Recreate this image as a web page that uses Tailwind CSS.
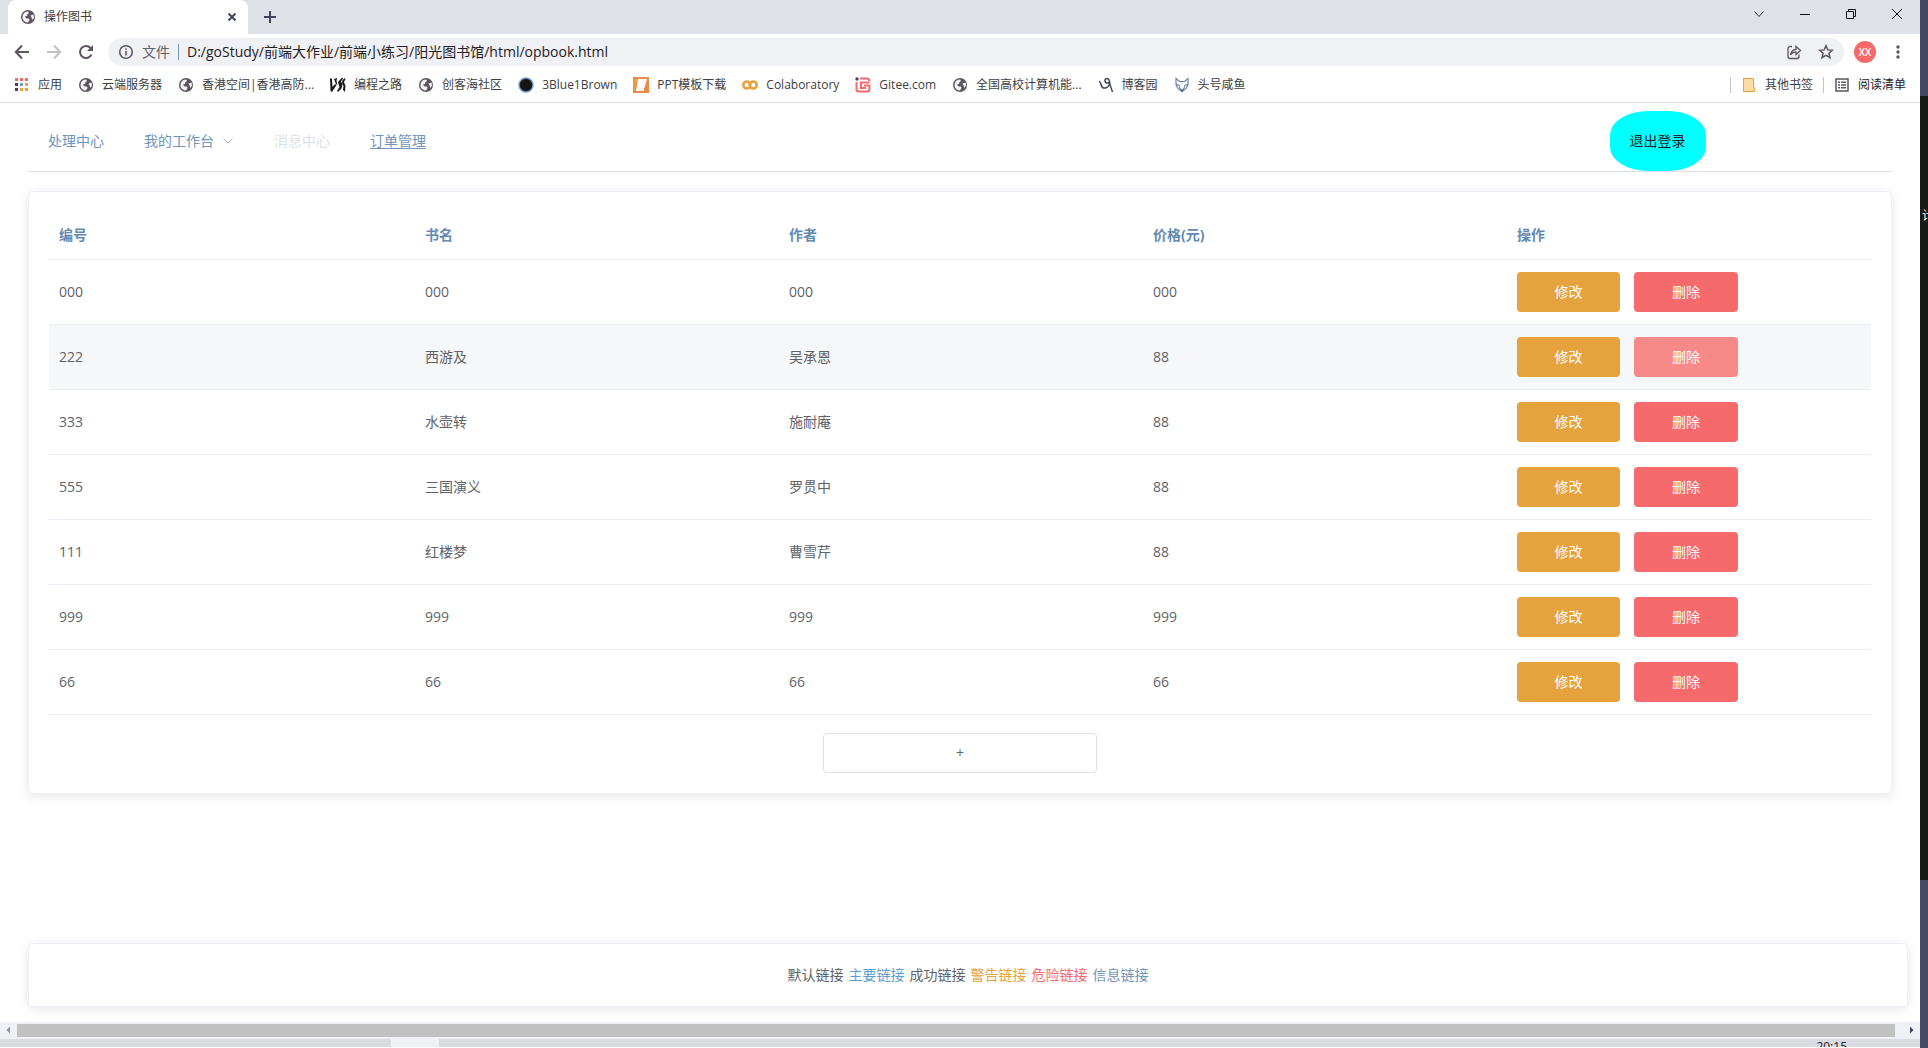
<!DOCTYPE html>
<html lang="zh-CN">
<head>
<meta charset="utf-8">
<title>操作图书</title>
<script src="https://cdn.jsdelivr.net/npm/@tailwindcss/browser@4"></script>
</head>
<body class="flex h-screen overflow-hidden bg-white font-['Open_Sans','Noto_Sans_CJK_SC',sans-serif] text-sm text-[#606266]">
<svg class="absolute size-0">
  <symbol id="globe" viewBox="0 0 16 16"><circle cx="8" cy="8" r="7" fill="#5d545f"/><path d="M3 5.500C4 3.500 6 2.300 8.200 2.400L9 4 7.500 5 7 7 4.800 7.600 6.500 9.500 9 9.500 9.500 11 8 13.500C5 13.500 2.500 11 2.500 8.500ZM10.500 6.500L13.500 5.500 14 8.500 12.500 11 11.500 8.500Z" fill="#f4f4f6"/></symbol>
</svg>

<div class="flex min-w-0 flex-1 flex-col">
  <!-- tab strip -->
  <div class="flex h-[34px] shrink-0 items-stretch bg-[#dee1e7] pl-2">
    <div class="flex w-60 items-center rounded-t-lg bg-white pr-2.5 pl-3 text-xs text-[#3c4043]">
      <svg class="mr-2 size-4"><use href="#globe"/></svg>
      <span class="flex-1">操作图书</span>
      <button aria-label="关闭标签页"><svg class="size-3" viewBox="0 0 12 12" stroke="#3f4458" stroke-width="2"><path d="M2.500 2.500l7 7M9.500 2.500l-7 7"/></svg></button>
    </div>
    <button aria-label="新标签页" class="ml-4"><svg class="size-3" viewBox="0 0 12 12" stroke="#3f4458" stroke-width="2"><path d="M6 0v12M0 6h12"/></svg></button>
    <div class="mr-[17px] ml-auto flex h-7 items-center gap-[34px]">
      <button aria-label="搜索标签页"><svg class="size-3" viewBox="0 0 12 12" fill="none" stroke="#333"><path d="M1.500 3.500l4.500 5 4.500-5"/></svg></button>
      <button aria-label="最小化"><svg class="size-3" viewBox="0 0 12 12" stroke="#111"><path d="M1 6.500h10"/></svg></button>
      <button aria-label="还原"><svg class="size-3" viewBox="0 0 12 12" fill="none" stroke="#111"><path d="M1.500 3.500h7v7h-7zM3.500 3.500v-2h7v7h-2"/></svg></button>
      <button aria-label="关闭"><svg class="size-3" viewBox="0 0 12 12" stroke="#111"><path d="M1 1l10 10M11 1L1 11"/></svg></button>
    </div>
  </div>

  <!-- address bar -->
  <div class="flex h-9 shrink-0 items-center pl-3.5">
    <button aria-label="后退"><svg class="size-4" viewBox="0 0 16 16" fill="none" stroke="#5d545f" stroke-width="2"><path d="M15 8H2M8 1.500L1.800 8 8 14.500"/></svg></button>
    <button aria-label="前进" class="ml-4"><svg class="size-4" viewBox="0 0 16 16" fill="none" stroke="#c2c2c4" stroke-width="2"><path d="M1 8h13M8 1.500L14.200 8 8 14.500"/></svg></button>
    <button aria-label="刷新" class="ml-4"><svg class="size-4" viewBox="0 0 16 16" fill="none" stroke="#5d545f" stroke-width="2"><path d="M13.500 10.500A6 6 0 1 1 12.500 4"/><path d="M15 1v6H9z" fill="#5d545f" stroke="none"/></svg></button>
    <div class="ml-3.5 flex h-7 flex-1 items-center rounded-full bg-[#f0f1f4] pr-2.5 pl-2.5">
      <svg class="size-4" viewBox="0 0 16 16" fill="none" stroke="#5d545f" stroke-width="1.500"><circle cx="8" cy="8" r="6.300"/><path d="M8 7v4.500M8 4.200v1.600"/></svg>
      <span class="ml-2 text-[#5f6368]">文件</span>
      <span class="mx-2 h-4 w-px bg-[#7295bd]"></span>
      <input aria-label="地址" class="min-w-0 flex-1 bg-transparent text-[#1f2023] outline-none" value="D:/goStudy/前端大作业/前端小练习/阳光图书馆/html/opbook.html">
      <button aria-label="分享"><svg class="size-4" viewBox="0 0 16 16" fill="none" stroke="#5d545f" stroke-width="1.300"><path d="M6 2.500H4a2 2 0 0 0-2 2v8a2 2 0 0 0 2 2h7a2 2 0 0 0 2-2V10.500"/><path d="M4.500 11C5 7.500 7 5.500 10 5.300V2.500l4.500 4-4.500 4V7.800C7.500 7.800 6 8.800 4.500 11Z"/></svg></button>
      <button aria-label="收藏" class="ml-4"><svg class="size-4" viewBox="0 0 16 16" fill="none" stroke="#5d545f" stroke-width="1.500"><path d="M8 1.800l1.800 4.100 4.500.4-3.400 2.900 1.100 4.400L8 11.300l-4 2.300 1.100-4.400L1.700 6.300l4.500-.4z"/></svg></button>
    </div>
    <span class="mx-2.5 flex size-[22px] items-center justify-center rounded-full bg-[#f66a6b] text-[10px] font-semibold text-white">XX</span>
    <button aria-label="菜单" class="mr-3.5 ml-1"><svg class="size-4" viewBox="0 0 16 16" fill="#5d545f"><circle cx="8" cy="3" r="1.700"/><circle cx="8" cy="8" r="1.700"/><circle cx="8" cy="13" r="1.700"/></svg></button>
  </div>

  <!-- bookmarks -->
  <nav class="flex h-[33px] shrink-0 items-center gap-4 border-b border-[#dcdde3] pr-3.5 pb-0.5 pl-3.5 text-xs whitespace-nowrap text-[#3c4043]">
    <a href="#" class="flex items-center gap-2"><svg class="size-4" viewBox="0 0 16 16"><path d="M1 1h3v3H1zM6 1h3v3H6zM11 1h3v3h-3z" fill="#f66a6b"/><path d="M1 6h3v3H1zM1 11h3v3H1z" fill="#3f4458"/><path d="M6 6h3v3H6z" fill="#6c9bcf"/><path d="M11 6h3v3h-3zM6 11h3v3H6zM11 11h3v3h-3z" fill="#e6a23c"/></svg>应用</a>
    <a href="#" class="flex items-center gap-2"><svg class="size-4"><use href="#globe"/></svg>云端服务器</a>
    <a href="#" class="flex items-center gap-2"><svg class="size-4"><use href="#globe"/></svg>香港空间|香港高防...</a>
    <a href="#" class="flex items-center gap-2"><svg class="size-4" viewBox="0 0 16 16" fill="#1a1a1a"><path d="M0 1l2 1 .5 8L5 7l1.500 1L2 15 .5 14zM4 2l3-1-.5 3 1 4-1.500-1zM8 5l4-4.500 1 1-2 3 1.500 3-1 4L8 15l-1-1 2.500-4zM12.500 3L15 1l.5 1-1.500 3 1.500 4-.5 6-2-2 .5-4-1.500-3z"/></svg>编程之路</a>
    <a href="#" class="flex items-center gap-2"><svg class="size-4"><use href="#globe"/></svg>创客海社区</a>
    <a href="#" class="flex items-center gap-2"><svg class="size-4" viewBox="0 0 16 16"><circle cx="8" cy="8" r="7" fill="#151515" stroke="#7ba6d2" stroke-width="1.500"/><circle cx="8" cy="8" r="6" fill="none" stroke="#30405c" stroke-dasharray="1 1"/></svg>3Blue1Brown</a>
    <a href="#" class="flex items-center gap-2"><svg class="size-4" viewBox="0 0 16 16"><path d="M0 0h16v16H0z" fill="#ec8a4a"/><path d="M5 2h9l-3.500 12H3z" fill="#fff"/><path d="M1 2h3L2 14H1z" fill="#e6a23c"/></svg>PPT模板下载</a>
    <a href="#" class="flex items-center gap-2"><svg class="size-4" viewBox="0 0 16 16" fill="none" stroke="#e6a23c" stroke-width="2.600"><circle cx="4.800" cy="8" r="3.500"/><circle cx="11.200" cy="8" r="3.500"/></svg>Colaboratory</a>
    <a href="#" class="flex items-center gap-2"><svg class="size-4" viewBox="0 0 16 16" fill="none" stroke="#f66a6b" stroke-width="2"><path d="M5 1.500h6.500a3.500 3.500 0 0 1 3.200 2.500M1.500 5v7.500a2 2 0 0 0 2 2H12a2.500 2.500 0 0 0 2.500-2.500V8.500H9M14.500 5.500H6v5.500h5"/><circle cx="2" cy="2" r="1.700" fill="#3f4458" stroke="none"/></svg>Gitee.com</a>
    <a href="#" class="flex items-center gap-2"><svg class="size-4"><use href="#globe"/></svg>全国高校计算机能...</a>
    <a href="#" class="flex items-center gap-2"><svg class="size-4" viewBox="0 0 16 16" fill="none" stroke="#3f4458" stroke-width="1.500"><path d="M1 4.500c1 0 1.500 1 2 3s2 4 4.500 3.500S12 8 11.500 4.500 7 .5 7 3.500s3.500 3.500 5 1M11.500 5c.5 3 1.500 6 3 10"/></svg>博客园</a>
    <a href="#" class="flex items-center gap-2"><svg class="size-4" viewBox="0 0 16 16" fill="none" stroke="#6a86a8" stroke-width="1.200"><path d="M2 1.500l3.500 3h5l3.500-3v6L12.500 11 8 14.800 3.500 11 2 7.500zM2 7l4 2M14 7l-4 2M5 9.500L8 14l3-4.500"/><path d="M6.500 12.800h3L8 15z" fill="#3f5f8a" stroke="none"/></svg>头号咸鱼</a>
    <div class="ml-auto flex items-center">
      <span class="mr-3 h-4 w-px bg-[#c4c4c8]"></span>
      <a href="#" class="flex items-center gap-2.5"><svg class="h-4 w-3" viewBox="0 0 12 16"><path d="M.5 1.500h10v9h1v4h-11z" fill="#fbdca4" stroke="#e6a23c"/></svg>其他书签</a>
      <span class="mx-2.5 h-4 w-px bg-[#c4c4c8]"></span>
      <a href="#" class="flex items-center gap-2 text-[#1f2023]"><svg class="size-4" viewBox="0 0 16 16" fill="none" stroke="#5d545f" stroke-width="1.500"><path d="M2 2h12v12H2z"/><path d="M4 5.200h2M7 5.200h5M4 8h2M7 8h5M4 10.800h2M7 10.800h5"/></svg>阅读清单</a>
    </div>
  </nav>

  <!-- page -->
  <header class="mx-7 mt-2 flex shrink-0 border-b border-[#dcdfe6] leading-[60px] text-[#6f95bb]">
    <a href="#" class="px-5">处理中心</a>
    <a href="#" class="flex items-center gap-2 px-5">我的工作台<svg class="size-3" viewBox="0 0 12 12" fill="none" stroke="#a3adb8"><path d="M1.500 3.500L6 8l4.500-4.500"/></svg></a>
    <a href="#" aria-disabled="true" class="px-5 text-[#dcdfe6]">消息中心</a>
    <a href="#" class="px-5 underline underline-offset-2">订单管理</a>
    <button class="mr-[10%] ml-auto rounded-[40%] bg-[#00ffff] px-5 text-[#1f2023]">退出登录</button>
  </header>

  <main class="mx-7 mt-[19px] shrink-0 rounded border border-[#ebeef5] p-5 shadow-[0_2px_12px_0_rgba(0,0,0,0.1)]">
    <table class="w-full table-fixed text-left">
      <thead>
        <tr class="h-[47px] border-b border-[#ebeef5] text-[#6489b3]">
          <th class="w-[366px] px-2.5 font-bold">编号</th><th class="px-2.5 font-bold">书名</th><th class="px-2.5 font-bold">作者</th><th class="px-2.5 font-bold">价格(元)</th><th class="px-2.5 font-bold">操作</th>
        </tr>
      </thead>
      <tbody id="books"></tbody>
    </table>
    <button class="mx-auto mt-[18px] block h-10 w-[15%] rounded border border-[#dcdfe6]">+</button>
  </main>

  <footer class="mt-[149px] mr-3 ml-7 flex shrink-0 justify-center gap-[5px] rounded border border-[#ebeef5] p-5 leading-[22px] shadow-[0_2px_12px_0_rgba(0,0,0,0.1)]">
    <a href="#">默认链接</a>
    <a href="#" class="text-[#5a9fd4]">主要链接</a>
    <a href="#">成功链接</a>
    <a href="#" class="text-[#e6a23c]">警告链接</a>
    <a href="#" class="text-[#f66a6b]">危险链接</a>
    <a href="#" class="text-[#6f95bb]">信息链接</a>
  </footer>

  <!-- horizontal scrollbar -->
  <div class="mt-[15px] flex h-[17px] shrink-0 items-center bg-[#f0f1f4]">
    <svg class="h-4 w-[17px]" viewBox="0 0 17 16"><path d="M10 4.500v7L6.500 8z" fill="#8a93a6"/></svg>
    <div class="mr-2 h-[13px] flex-1 bg-[#c1c1c1]"></div>
    <svg class="h-4 w-[17px]" viewBox="0 0 17 16"><path d="M7 4.500v7L10.500 8z" fill="#3f4458"/></svg>
  </div>

  <!-- taskbar -->
  <div class="flex h-2 shrink-0 overflow-hidden bg-[#dadbe1]">
    <div class="ml-[391px] w-12 bg-[#f0f1f4]"></div>
    <span class="mt-0.5 mr-[73px] ml-auto text-xs leading-3 text-[#1f2023]">20:15</span>
  </div>
</div>

<!-- desktop behind the window -->
<aside class="flex w-2 shrink-0 flex-col overflow-hidden bg-[#171a17]">
  <div class="h-24 bg-[#434860]"></div>
  <span class="mt-[112px] w-4 pl-0.5 text-xs leading-4 text-white">计</span>
  <div class="mt-auto h-[168px] bg-[#464961]"></div>
</aside>

<script>
  const books = [
    ['000', '000', '000', '000'],
    ['222', '西游及', '吴承恩', '88'],
    ['333', '水壶转', '施耐庵', '88'],
    ['555', '三国演义', '罗贯中', '88'],
    ['111', '红楼梦', '曹雪芹', '88'],
    ['999', '999', '999', '999'],
    ['66', '66', '66', '66'],
  ];
  const active = 1;
  document.getElementById('books').innerHTML = books.map((book, i) => `
    <tr class="h-[65px] border-b border-[#ebeef5] ${i === active ? 'bg-[#f6f7f9]' : ''}">
      ${book.map(v => `<td class="px-2.5">${v}</td>`).join('')}
      <td class="px-2.5"><div class="flex gap-3.5 text-white">
        <button class="h-10 w-[103px] rounded bg-[#e6a23c]">修改</button>
        <button class="h-10 w-[104px] rounded ${i === active ? 'bg-[#f78989]' : 'bg-[#f66a6b]'}">删除</button>
      </div></td>
    </tr>`).join('');
</script>
</body>
</html>
